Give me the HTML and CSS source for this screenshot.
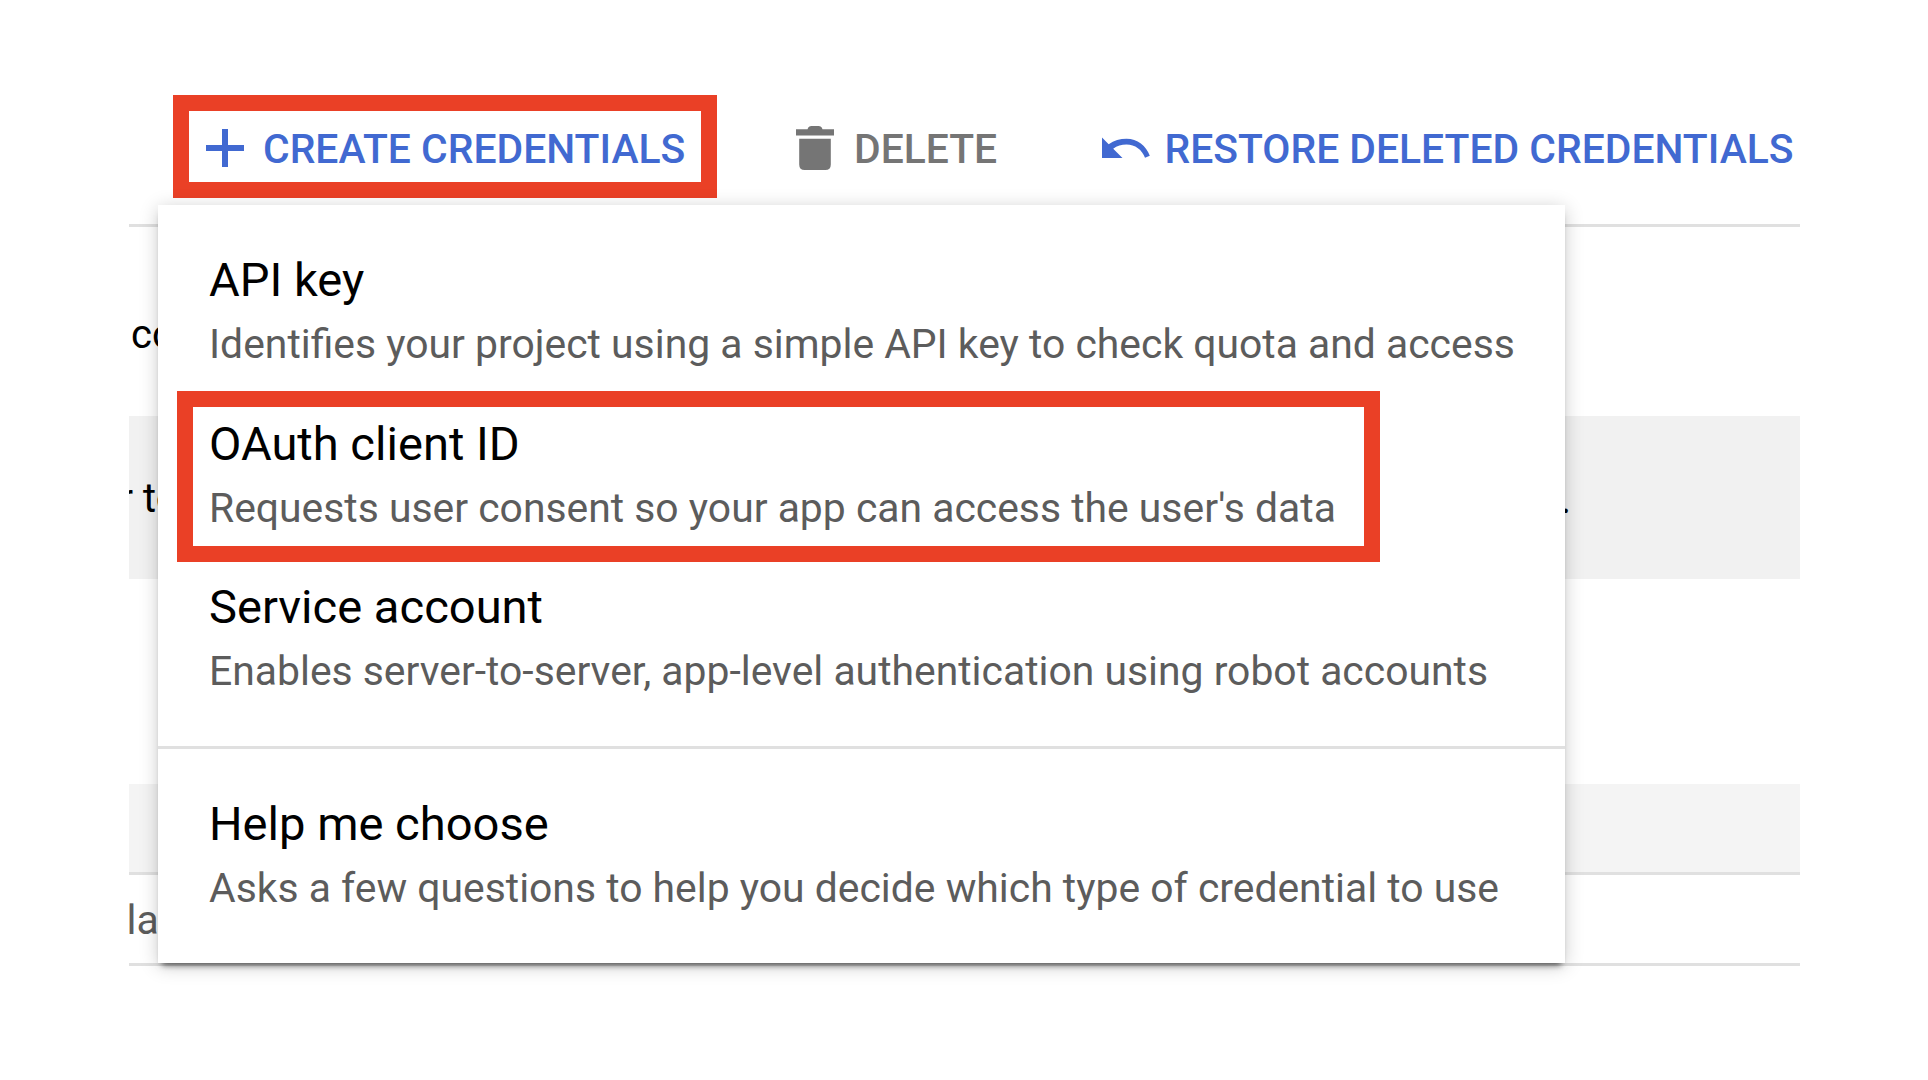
FILE: index.html
```html
<!DOCTYPE html>
<html lang="en">
<head>
<meta charset="utf-8">
<title>Credentials</title>
<link rel="stylesheet" href="styles.css">
</head>
<body>
<main class="page">
  <header class="toolbar">
    <button class="action create">
      <svg class="icon-plus" viewBox="0 0 38 38"><path d="M16 0h6v16h16v6H22v16h-6V22H0v-6h16z"/></svg>
      <span>CREATE CREDENTIALS</span>
    </button>
    <button class="action delete">
      <svg class="icon-trash" viewBox="0 0 38 44"><path d="M0 3.200h11.500Q12.500 0 15.500 0h7q3 0 4 3.200H38V9.500H0zM3.200 12.700h31.600V38.500q0 5.500-5.500 5.500H8.700q-5.500 0-5.500-5.500z"/></svg>
      <span>DELETE</span>
    </button>
    <button class="action restore">
      <svg class="icon-undo" viewBox="0 0 48 22"><path d="M0 .5l6.700 6.700C12 3.500 18 1.800 24.500 1.800c10.800 0 19.800 7 23.300 17l-4.800 2C40.300 12.900 33 7.500 24.500 7.500c-5 0-9.500 1.300-13.300 4.200l9.300 9.300H0z"/></svg>
      <span>RESTORE DELETED CREDENTIALS</span>
    </button>
  </header>

  <section class="content">
    <div class="row intro"><span>co</span></div>
    <div class="row notice"><span class="lead">r to</span><span class="stop">.</span></div>
    <div class="row gap"></div>
    <div class="row band"></div>
    <div class="row empty"><span>lay</span></div>
  </section>

  <nav class="menu">
    <div class="group">
      <a class="item"><span class="title">API key</span><span class="desc">Identifies your project using a simple API key to check quota and access</span></a>
      <a class="item selected"><span class="title">OAuth client ID</span><span class="desc">Requests user consent so your app can access the user's data</span></a>
      <a class="item"><span class="title">Service account</span><span class="desc">Enables server-to-server, app-level authentication using robot accounts</span></a>
    </div>
    <div class="group help">
      <a class="item"><span class="title">Help me choose</span><span class="desc">Asks a few questions to help you decide which type of credential to use</span></a>
    </div>
  </nav>
</main>
</body>
</html>
```
FILE: styles.css
```css
*, *::after { box-sizing: border-box; }
body { margin: 0; background: #fff; font-family: Roboto, "Liberation Sans", sans-serif; }
.page { position: relative; width: 1928px; height: 1080px; padding: 0 128px 0 129px; overflow: hidden; background: #fff; }
svg { display: block; fill: currentColor; flex: none; }

.toolbar { display: flex; align-items: flex-start; height: 224px; padding: 124px 0 0 77px; }
.action { position: relative; display: flex; align-items: center; height: 48px; padding: 0; border: 0; background: none; font: 500 40.850px/48px Roboto, "Liberation Sans", sans-serif; white-space: nowrap; color: #4169d1; }
.action span { padding-top: 1px; }
.create { gap: 19px; width: 590px; }
.create::after { content: ""; position: absolute; left: -33px; top: -29px; width: 544px; height: 103px; border: 16px solid #ea4026; }
.delete { gap: 20px; width: 306px; color: #757575; }
.restore { gap: 14.500px; }
.icon-plus { width: 38px; height: 38px; }
.icon-trash { width: 38px; height: 44px; }
.icon-undo { width: 48px; height: 22px; }

.content { border-top: 3px solid #e0e0e0; font-size: 40px; line-height: 48px; color: #000; }
.row { overflow: hidden; white-space: nowrap; }
.intro { height: 189px; padding: 84px 0 0 2px; }
.notice { display: flex; height: 163px; padding-top: 59px; background: #f1f1f1; }
.notice .lead { width: 1440px; margin-left: -9.500px; }
.notice .stop { margin-left: 1px; padding-top: 1px; }
.gap { height: 205px; }
.band { height: 91px; background: #f4f4f4; border-bottom: 3px solid #e0e0e0; }
.empty { height: 91px; padding-top: 21px; border-bottom: 3px solid #e0e0e0; color: #5c5c5c; font-size: 41px; }
.empty span { margin-left: -2.500px; }

.menu { position: absolute; left: 158px; top: 205px; width: 1407px; height: 758px; background: #fff; box-shadow: 0 6px 6px -4px rgba(0,0,0,.6), 0 3px 18px rgba(0,0,0,.2); }
.group { padding: 26px 0 0 51px; height: 541px; }
.help { height: auto; border-top: 3px solid #e0e0e0; }
.item { position: relative; display: flex; flex-direction: column; height: 163.500px; padding-top: 19px; white-space: nowrap; }
.title { font-size: 47.100px; line-height: 60px; color: #000; }
.desc { margin-top: 4px; font-size: 40.870px; line-height: 60px; color: #5c5c5c; }
.selected::after { content: ""; position: absolute; left: -32px; top: -4px; width: 1203px; height: 171px; border: 16px solid #ea4026; }
```
